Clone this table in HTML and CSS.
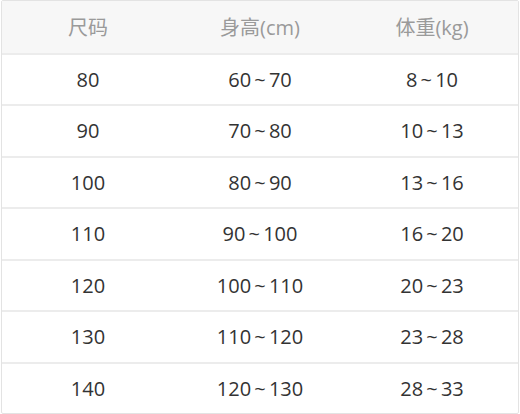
FILE: index.html
```html
<!DOCTYPE html>
<html lang="zh">
<head>
<meta charset="utf-8">
<link rel="stylesheet" href="styles.css">
</head>
<body>
<div class="table">
  <div class="row head">
    <div class="cell">尺码</div>
    <div class="cell">身高(cm)</div>
    <div class="cell">体重(kg)</div>
  </div>
  <div class="row"><div class="cell">80</div><div class="cell">60 ~ 70</div><div class="cell">8 ~ 10</div></div>
  <div class="row"><div class="cell">90</div><div class="cell">70 ~ 80</div><div class="cell">10 ~ 13</div></div>
  <div class="row"><div class="cell">100</div><div class="cell">80 ~ 90</div><div class="cell">13 ~ 16</div></div>
  <div class="row"><div class="cell">110</div><div class="cell">90 ~ 100</div><div class="cell">16 ~ 20</div></div>
  <div class="row"><div class="cell">120</div><div class="cell">100 ~ 110</div><div class="cell">20 ~ 23</div></div>
  <div class="row"><div class="cell">130</div><div class="cell">110 ~ 120</div><div class="cell">23 ~ 28</div></div>
  <div class="row"><div class="cell">140</div><div class="cell">120 ~ 130</div><div class="cell">28 ~ 33</div></div>
</div>
</body>
</html>
```
FILE: styles.css
```css
* { box-sizing: border-box; }
html, body { margin: 0; padding: 0; background: #fff; }
body {
  width: 520px;
  height: 414px;
  font-family: "Open Sans", "Noto Sans CJK SC", sans-serif;
}
.table {
  margin: 0 1px 0 1px;
  height: 414px;
  border: 1px solid #e3e3e3;
  border-radius: 2px;
  display: grid;
  grid-template-rows: repeat(8, 1fr);
  overflow: hidden;
}
.row {
  display: grid;
  grid-template-columns: 1fr 1fr 1fr;
  align-items: center;
  border-top: 2px solid #ececec;
  color: #333;
  font-size: 20px;
}
.row.head {
  border-top: none;
  background: #f7f7f7;
  color: #9a9a9a;
}
.cell {
  text-align: center;
  word-spacing: -2px;
}
```
